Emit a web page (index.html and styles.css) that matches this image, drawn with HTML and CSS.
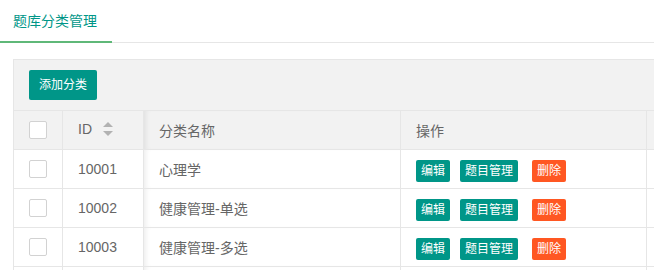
FILE: index.html
```html
<!DOCTYPE html>
<html>
    <head>
        <meta name="viewport" content="width=device-width, initial-scale=1">
        <link rel="stylesheet" href="styles.css">
    </head>
    <body>
        <div class="tab-title">
            <span class="tab-item active">题库分类管理</span>
        </div>
        <div class="table-view">
            <div class="table-tool">
                <button class="btn btn-sm">添加分类</button>
            </div>
            <table class="table">
                <thead>
                    <tr>
                        <th class="col-check"><span class="checkbox"></span></th>
                        <th class="col-id">ID <span class="sort"><svg width="10" height="14" viewBox="0 0 10 14"><path d="M0 5 L5 0 L10 5 Z" fill="#b2b2b2"/><path d="M0 9 L5 14 L10 9 Z" fill="#b2b2b2"/></svg></span></th>
                        <th class="col-name">分类名称</th>
                        <th class="col-ops">操作</th>
                        <th class="col-rest"></th>
                    </tr>
                </thead>
                <tbody>
                    <tr>
                        <td class="col-check"><span class="checkbox"></span></td>
                        <td class="col-id">10001</td>
                        <td class="col-name">心理学</td>
                        <td class="col-ops"><button class="btn btn-xs">编辑</button><button class="btn btn-xs">题目管理</button><button class="btn btn-xs btn-danger">删除</button></td>
                        <td class="col-rest"></td>
                    </tr>
                    <tr>
                        <td class="col-check"><span class="checkbox"></span></td>
                        <td class="col-id">10002</td>
                        <td class="col-name">健康管理-单选</td>
                        <td class="col-ops"><button class="btn btn-xs">编辑</button><button class="btn btn-xs">题目管理</button><button class="btn btn-xs btn-danger">删除</button></td>
                        <td class="col-rest"></td>
                    </tr>
                    <tr>
                        <td class="col-check"><span class="checkbox"></span></td>
                        <td class="col-id">10003</td>
                        <td class="col-name">健康管理-多选</td>
                        <td class="col-ops"><button class="btn btn-xs">编辑</button><button class="btn btn-xs">题目管理</button><button class="btn btn-xs btn-danger">删除</button></td>
                        <td class="col-rest"></td>
                    </tr>
                    <tr>
                        <td class="col-check"></td>
                        <td class="col-id"></td>
                        <td class="col-name"></td>
                        <td class="col-ops"></td>
                        <td class="col-rest"></td>
                    </tr>
                </tbody>
            </table>
        </div>
    </body>
</html>
```

FILE: styles.css
```css
html, body {
margin: 0;
overflow: hidden;
background: #fff;
}

body {
font-family: "Liberation Sans", "Noto Sans CJK SC", sans-serif;
font-size: 14px;
color: #666;
}

.tab-title {
height: 42px;
border-bottom: 1px solid #e6e6e6;
white-space: nowrap;
}

.tab-item {
display: inline-block;
box-sizing: border-box;
height: 43px;
line-height: 43px;
padding: 0 14px 0 13px;
margin-bottom: -1px;
color: #333;
}

.tab-item.active {
color: #009688;
border-bottom: 2px solid #5fb878;
line-height: 42px;
padding-right: 15px;
}

.table-view {
margin: 16px 0 0 13px;
width: 700px;
border: 1px solid #e6e6e6;
border-bottom: none;
}

.table-tool {
height: 30px;
padding: 10px 15px;
background: #f2f2f2;
border-bottom: 1px solid #e6e6e6;
}

.btn {
display: inline-block;
border: none;
border-radius: 2px;
background-color: #009688;
color: #fff;
font-family: inherit;
cursor: pointer;
padding: 0;
vertical-align: middle;
}

.btn-sm {
height: 30px;
line-height: 30px;
padding: 0 10px;
font-size: 12px;
}

.btn-xs {
height: 22px;
line-height: 22px;
padding: 0 5px;
font-size: 12px;
margin-right: 10px;
}

.btn-xs + .btn-xs + .btn-xs {
margin-left: 4px;
}

.btn-danger {
background-color: #ff5722;
}

.table {
border-collapse: collapse;
table-layout: fixed;
width: 100%;
}

.table th,
.table td {
height: 38px;
padding: 0 15px;
text-align: left;
font-weight: normal;
border-bottom: 1px solid #e6e6e6;
border-right: 1px solid #e6e6e6;
white-space: nowrap;
overflow: hidden;
vertical-align: middle;
}

.table th {
background: #f2f2f2;
}

.table td.col-ops {
padding-top: 3px;
box-sizing: border-box;
}

.col-check { width: 18px; }
.col-id { width: 50px; }
.col-name {
width: 226px;
box-shadow: inset 5px 0 5px -3px rgba(0, 0, 0, 0.07);
}
.col-ops { width: 215px; }

.table .col-rest {
border-right: none;
}

.checkbox {
display: block;
box-sizing: border-box;
width: 18px;
height: 18px;
border: 1px solid #d2d2d2;
border-radius: 2px;
background: #fff;
}

.sort {
display: inline-block;
margin-left: 7px;
vertical-align: -2px;
}
```
